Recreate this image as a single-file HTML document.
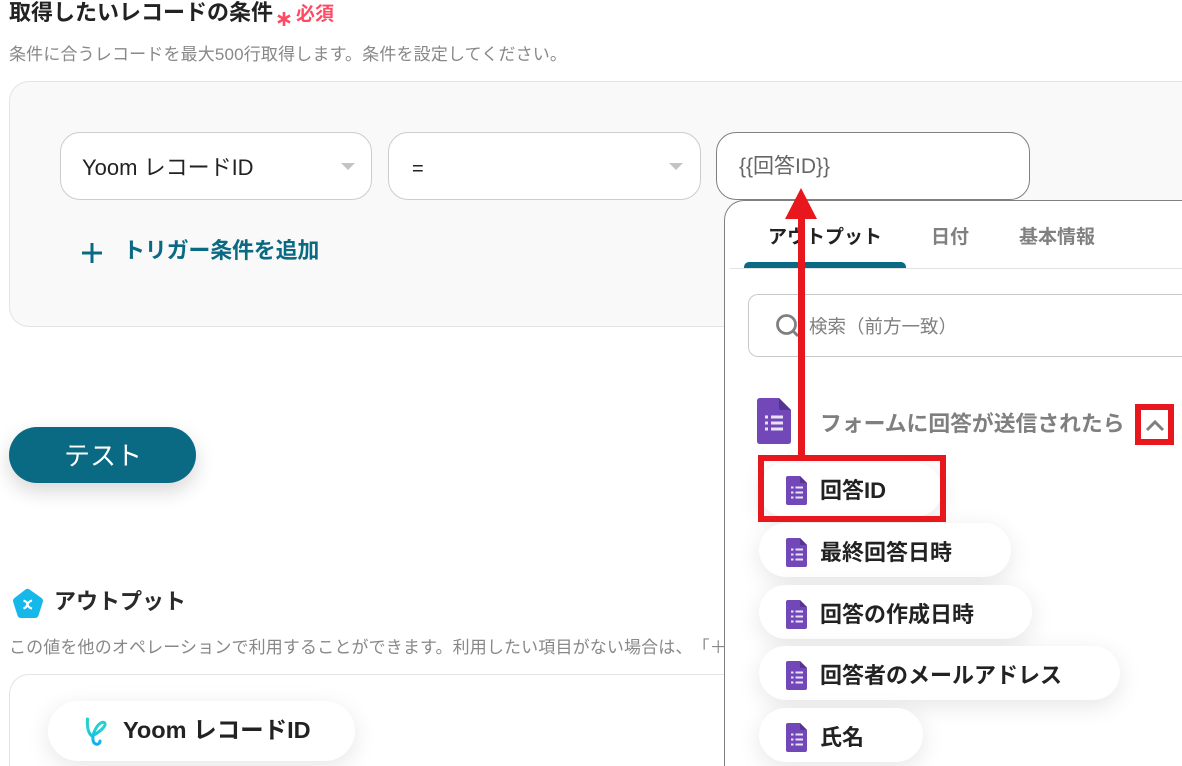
<!DOCTYPE html>
<html lang="ja"><head><meta charset="utf-8"><style>
html,body{margin:0;padding:0;background:#fff}
#p{position:relative;width:1182px;height:766px;overflow:hidden;background:#fff;font-family:"Liberation Sans","Noto Sans CJK JP",sans-serif;color:#222;text-spacing-trim:space-all}
#p div{position:absolute;white-space:nowrap;box-sizing:border-box}
.box{background:#fff;border:1px solid #ccc;border-radius:20px}
.pill{background:#fff;border-radius:27px;box-shadow:0 6px 24px rgba(0,0,0,.1);height:54px;left:759px}
.lab{font-weight:700;font-size:22px;line-height:32px;color:#222}
svg{position:absolute;overflow:visible}
</style></head><body><div id="p">
<div class="lab" style="left:9px;top:-3px">取得したいレコードの条件</div>
<svg style="left:276px;top:11px" width="16" height="16" viewBox="0 0 16 16"><path d="M8 1V15M2 4.500L14 11.500M14 4.500L2 11.500" stroke="#ff4a63" stroke-width="2.600"/></svg>
<div style="left:296px;top:0;font-size:19px;line-height:30px;font-weight:700;color:#ff4a63">必須</div>
<div style="left:9px;top:43px;font-size:17px;line-height:24px;color:#888;letter-spacing:.16px">条件に合うレコードを最大500行取得します。条件を設定してください。</div>

<div style="left:9px;top:81px;width:1173px;height:246px;background:#f9f9f9;border:1px solid #e4e4e4;border-right:none;border-radius:20px 0 0 20px"></div>

<div class="box" style="left:60px;top:132px;width:312px;height:68px"></div>
<div style="left:82px;top:152px;font-size:22px;line-height:32px;color:#222">Yoom レコードID</div>
<svg style="left:341px;top:163px" width="14" height="8"><path d="M0 0H14L7 7Z" fill="#c4c4c4"/></svg>
<div class="box" style="left:388px;top:132px;width:313px;height:68px"></div>
<div style="left:412px;top:153px;font-size:20px;line-height:32px;color:#222">=</div>
<svg style="left:669px;top:163px" width="14" height="8"><path d="M0 0H14L7 7Z" fill="#c4c4c4"/></svg>
<div class="box" style="left:716px;top:132px;width:314px;height:68px;border-color:#808080"></div>
<div style="left:739px;top:151px;font-size:21px;line-height:32px;color:#666">{{回答ID}}</div>

<svg style="left:81px;top:242px" width="22" height="20"><path d="M11 1V21M1 11H21" stroke="#0b6a83" stroke-width="3"/></svg>
<div style="left:123px;top:235px;font-size:22px;line-height:32px;font-weight:700;color:#0b6a83;letter-spacing:-.2px">トリガー条件を追加</div>

<div style="left:9px;top:427px;width:187px;height:56px;border-radius:28px;background:#0b6a83;box-shadow:0 8px 20px rgba(0,0,0,.16)"></div>
<div style="left:64px;top:438px;font-size:26px;line-height:36px;color:#fff">テスト</div>

<svg style="left:12px;top:588px" width="32" height="32" viewBox="0 0 32 32"><path d="M13.500 1.500Q15.500 0 17.500 1.500L29.500 10Q31.500 11.500 30.800 14L26.500 27.500Q25.700 30 23 30H9Q6.300 30 5.500 27.500L1.200 14Q.5 11.500 2.500 10Z" fill="#16b8ea"/><path d="M11.500 12.500Q15 13.500 15.500 16.500T20 20.500M20 12.500Q16.500 13.500 15.500 16.500T11.500 20.500" fill="none" stroke="#fff" stroke-width="2.200"/></svg>
<div style="left:54px;top:586px;font-size:22px;line-height:32px;font-weight:700;color:#2a2a2a">アウトプット</div>
<div style="left:9px;top:636px;font-size:17px;line-height:24px;color:#888;letter-spacing:.14px">この値を他のオペレーションで利用することができます。利用したい項目がない場合は、「＋</div>
<div style="left:9px;top:674px;width:1173px;height:92px;background:#fff;border:1px solid #e4e4e4;border-right:none;border-bottom:none;border-radius:20px 0 0 0"></div>
<div style="left:48px;top:701px;width:307px;height:60px;border-radius:30px;background:#fff;box-shadow:0 6px 24px rgba(0,0,0,.1)"></div>
<svg style="left:84px;top:716px" width="24" height="32" viewBox="0 0 24 32"><defs><linearGradient id="g" x1="0" y1="0" x2="0" y2="1"><stop offset=".4" stop-color="#22cfd2"/><stop offset="1" stop-color="#10aef0"/></linearGradient></defs><path d="M3.500 3C3 10 4 17 8 20C14 17 22 11 21 7.500C19 4 14 8 11 14C8 20 8 27 12 28C14 29 16 27 16 25" fill="none" stroke="url(#g)" stroke-width="3" stroke-linecap="round"/></svg>
<div style="left:123px;top:714px;font-size:23.500px;line-height:32px;font-weight:700;color:#222">Yoom レコードID</div>

<div style="left:724px;top:200px;width:458px;height:566px;background:#fff;border:1px solid #808080;border-right:none;border-bottom:none;border-radius:20px 0 0 0"></div>
<div style="left:768px;top:223px;font-size:19px;line-height:30px;font-weight:700;color:#222">アウトプット</div>
<div style="left:931px;top:223px;font-size:19px;line-height:30px;font-weight:700;color:#808080">日付</div>
<div style="left:1019px;top:223px;font-size:19px;line-height:30px;font-weight:700;color:#808080">基本情報</div>
<div style="left:730px;top:268px;width:452px;height:1px;background:#e2e2e2"></div>
<div style="left:744px;top:262px;width:162px;height:6px;background:#0b6a83;border-radius:5px 5px 0 0"></div>
<div style="left:748px;top:294px;width:434px;height:63px;background:#fff;border:1px solid #c8c8c8;border-right:none;border-radius:10px 0 0 10px"></div>
<svg style="left:776px;top:313px" width="24" height="26" viewBox="0 0 24 26"><circle cx="10.500" cy="11.500" r="9" fill="none" stroke="#808080" stroke-width="2.800"/><path d="M17 18L22 23" stroke="#808080" stroke-width="3"/></svg>
<div style="left:809px;top:314px;font-size:18.500px;line-height:26px;color:#808080">検索（前方一致）</div>

<svg style="left:757px;top:398px" width="34" height="46" viewBox="0 0 34 46"><path d="M3 0H22L34 12V43Q34 46 31 46H3Q0 46 0 43V3Q0 0 3 0Z" fill="#7248b9"/><path d="M22 0L34 12H24Q22 12 22 10Z" fill="#573394"/><path d="M8 17.500h3v3H8zM8 23.500h3v3H8zM8 29.500h3v3H8zM14 17.500h12v3H14zM14 23.500h12v3H14zM14 29.500h12v3H14z" fill="#e9e2f5"/></svg>
<div style="left:820px;top:408px;font-size:21.800px;line-height:32px;font-weight:700;color:#7f7f7f">フォームに回答が送信されたら</div>
<svg style="left:1145px;top:418px" width="20" height="14"><path d="M2 12L10 4L18 12" fill="none" stroke="#7f7f7f" stroke-width="3"/></svg>

<div class="pill" style="top:463px;width:183px"></div>
<div class="pill" style="top:523px;width:252px"></div>
<div class="pill" style="top:585px;width:273px"></div>
<div class="pill" style="top:646px;width:361px"></div>
<div class="pill" style="top:708px;width:164px"></div>

<svg style="left:786px;top:476px" width="21" height="29" viewBox="0 0 21 29"><path d="M2 0H14L21 7V27Q21 29 19 29H2Q0 29 0 27V2Q0 0 2 0Z" fill="#7248b9"/><path d="M14 0L21 7H15Q14 7 14 6Z" fill="#573394"/><path d="M5 10.500h2.500v2H5zM5 15.500h2.500v2H5zM5 20.500h2.500v2H5zM9.500 10.500h7.500v2H9.500zM9.500 15.500h7.500v2H9.500zM9.500 20.500h7.500v2H9.500z" fill="#e9e2f5"/></svg>
<svg style="left:786px;top:538px" width="21" height="29" viewBox="0 0 21 29"><path d="M2 0H14L21 7V27Q21 29 19 29H2Q0 29 0 27V2Q0 0 2 0Z" fill="#7248b9"/><path d="M14 0L21 7H15Q14 7 14 6Z" fill="#573394"/><path d="M5 10.500h2.500v2H5zM5 15.500h2.500v2H5zM5 20.500h2.500v2H5zM9.500 10.500h7.500v2H9.500zM9.500 15.500h7.500v2H9.500zM9.500 20.500h7.500v2H9.500z" fill="#e9e2f5"/></svg>
<svg style="left:786px;top:600px" width="21" height="29" viewBox="0 0 21 29"><path d="M2 0H14L21 7V27Q21 29 19 29H2Q0 29 0 27V2Q0 0 2 0Z" fill="#7248b9"/><path d="M14 0L21 7H15Q14 7 14 6Z" fill="#573394"/><path d="M5 10.500h2.500v2H5zM5 15.500h2.500v2H5zM5 20.500h2.500v2H5zM9.500 10.500h7.500v2H9.500zM9.500 15.500h7.500v2H9.500zM9.500 20.500h7.500v2H9.500z" fill="#e9e2f5"/></svg>
<svg style="left:786px;top:661px" width="21" height="29" viewBox="0 0 21 29"><path d="M2 0H14L21 7V27Q21 29 19 29H2Q0 29 0 27V2Q0 0 2 0Z" fill="#7248b9"/><path d="M14 0L21 7H15Q14 7 14 6Z" fill="#573394"/><path d="M5 10.500h2.500v2H5zM5 15.500h2.500v2H5zM5 20.500h2.500v2H5zM9.500 10.500h7.500v2H9.500zM9.500 15.500h7.500v2H9.500zM9.500 20.500h7.500v2H9.500z" fill="#e9e2f5"/></svg>
<svg style="left:786px;top:723px" width="21" height="29" viewBox="0 0 21 29"><path d="M2 0H14L21 7V27Q21 29 19 29H2Q0 29 0 27V2Q0 0 2 0Z" fill="#7248b9"/><path d="M14 0L21 7H15Q14 7 14 6Z" fill="#573394"/><path d="M5 10.500h2.500v2H5zM5 15.500h2.500v2H5zM5 20.500h2.500v2H5zM9.500 10.500h7.500v2H9.500zM9.500 15.500h7.500v2H9.500zM9.500 20.500h7.500v2H9.500z" fill="#e9e2f5"/></svg>

<div class="lab" style="left:820px;top:475px">回答ID</div>
<div class="lab" style="left:820px;top:537px">最終回答日時</div>
<div class="lab" style="left:820px;top:599px">回答の作成日時</div>
<div class="lab" style="left:820px;top:660px">回答者のメールアドレス</div>
<div class="lab" style="left:820px;top:722px">氏名</div>

<div style="left:758px;top:455px;width:188px;height:67px;border:6px solid #e8171d"></div>
<div style="left:1135px;top:404px;width:39px;height:41px;border:6px solid #e8171d"></div>
<svg style="left:780px;top:180px" width="50" height="280"><path d="M18 277V39H5L21 8L37 39H25V277Z" fill="#e8171d"/></svg>
</div></body></html>
